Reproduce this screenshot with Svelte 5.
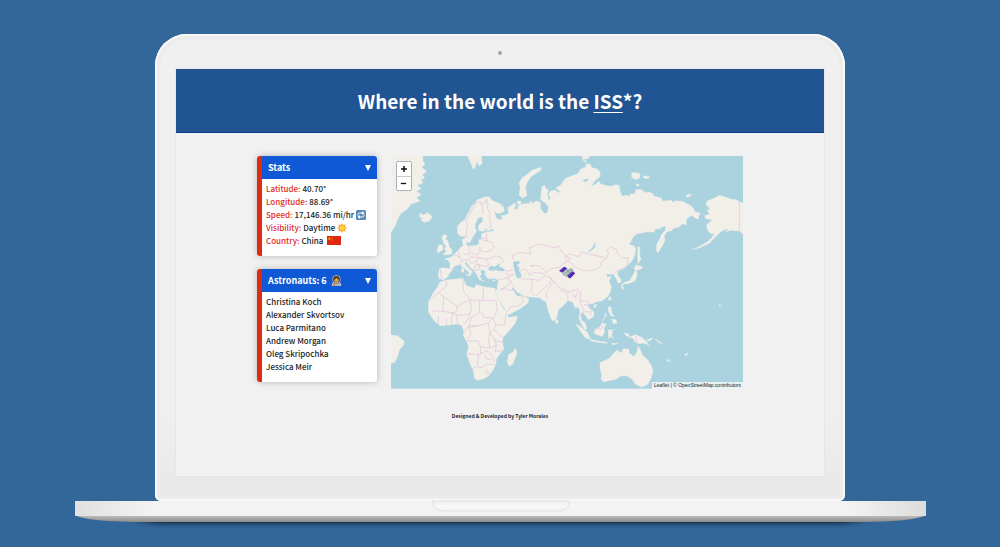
<script>
  let statsOpen = $state(true);
  let crewOpen = $state(true);

  const crew = [
    'Christina Koch',
    'Alexander Skvortsov',
    'Luca Parmitano',
    'Andrew Morgan',
    'Oleg Skripochka',
    'Jessica Meir'
  ];

  const land = [
    // Eurasia
    'M217 228L229 213 240 208 246 192 252 184 260 166 271 157 277 147 290 143 300 138 314 139 318 147 327 152 345 159 356 170 358 181 347 188 333 187 327 182 331 192 335 204 345 206 351 208 352 200 346 196 362 193 371 188 368 171 381 163 389 156 393 164 387 173 397 178 400 166 412 160 434 158 436 150 442 158 454 151 466 155 467 174 477 188 487 187 490 168 481 157 467 148 468 128 471 108 479 104 482 113 490 117 487 132 492 150 497 140 490 132 497 121 512 118 520 128 524 121 512 111 527 104 540 84 560 76 578 69 587 55 600 51 604 40 613 39 622 51 637 55 646 67 644 79 630 90 618 106 632 101 641 91 647 100 670 106 684 107 686 102 702 104 706 124 711 136 726 134 733 138 736 130 749 130 753 116 769 117 781 126 790 124 802 128 806 136 829 142 833 151 860 149 864 157 870 150 892 152 914 163 924 172 932 184 946 187 941 196 940 206 929 202 921 194 909 201 903 209 904 223 892 219 882 229 867 232 860 240 846 243 837 256 840 268 834 282 827 293 820 307 814 300 815 282 824 265 829 253 841 239 842 226 830 230 823 236 812 234 807 245 790 243 770 247 754 250 744 260 733 282 746 285 752 292 750 311 741 331 726 346 716 354 704 359 697 362 699 375 707 385 708 394 700 398 694 384 685 370 675 371 665 369 666 380 680 377 672 390 679 410 676 425 667 439 651 450 630 455 621 461 612 459 608 466 617 475 627 484 626 498 610 507 602 495 590 485 586 491 590 509 600 516 606 535 600 537 589 520 582 502 585 480 580 470 570 471 563 455 548 450 534 466 520 477 516 499 505 512 497 501 486 467 484 453 473 449 466 441 444 440 416 436 405 429 396 424 385 411 380 413 391 428 398 437 410 435 417 436 432 445 428 458 404 475 371 492 364 487 356 469 340 441 332 425 337 412 340 388 328 383 309 384 299 370 302 361 289 357 286 362 289 370 284 378 291 385 284 389 278 377 272 367 266 357 257 352 244 334 238 338 250 352 264 364 259 366 257 375 252 365 239 354 228 341 216 344 205 349 202 358 194 366 188 379 176 387 162 384 160 370 164 352 182 352 195 354 195 338 189 328 178 326 200 318 207 311 218 301 227 289 235 286 231 266 244 262 244 278 248 286 270 285 282 281 281 267 292 263 288 251 304 244 323 242 322 236 306 240 290 242 280 238 281 224 294 211 292 198 280 201 271 218 270 232 275 242 264 257 254 276 246 274 239 255 229 258 218 249Z',
    // Africa
    'M164 395L183 388 207 386 234 383 240 396 243 404 267 413 273 402 300 409 330 413 333 430 344 451 352 469 365 488 370 500 398 497 391 518 372 541 354 560 352 574 357 595 342 613 334 625 333 637 325 657 308 678 292 686 275 689 268 681 266 663 253 633 245 610 251 588 244 570 235 555 236 541 230 524 218 520 199 522 166 525 151 514 139 498 130 484 131 452 145 426 158 409Z',
    // Greenland and South America
    'M0 0L112 0 114 32 120 41 110 50 125 62 112 72 119 82 108 88 114 97 96 104 108 113 95 122 109 132 94 140 105 151 78 161 64 177 47 189 39 203 32 223 24 235 18 247 0 250Z',
    'M0 552L39 555 48 565 58 572 54 585 43 598 37 620 29 635 18 638 0 640Z',
    // Iceland, British Isles
    'M105 187L116 194 124 187 134 190 142 199 133 211 119 215 107 208 114 203 104 199Z',
    'M175 252L186 254 182 265 189 272 192 287 201 298 200 310 181 313 175 310 184 302 178 294 184 286 176 278 171 262Z',
    'M162 282L173 284 173 298 159 307 156 299Z',
    // Svalbard, Novaya Zemlya and arctic islands
    'M248 15L289 14 291 40 282 45 275 32 270 52 264 54 257 36Z',
    'M466 50L469 57 455 67 438 78 427 94 421 112 426 134 414 143 402 134 406 112 402 98 410 83 425 72 441 59Z',
    'M592 12L613 15 610 24 592 26Z M590 25L597 31 604 29 602 36Z',
    'M740 66L755 66 766 70 764 81 750 87 744 79 741 86Z M774 75L793 78 790 84 777 82Z M752 99L763 102 758 108Z M902 135L916 129 917 136 906 139Z M396 152L407 151 408 160 398 162Z',
    // Alaska
    'M1074 158L1052 147 1038 146 1022 140 1004 134 984 144 967 150 963 161 976 175 966 179 974 191 958 195 963 204 982 208 966 221 965 233 974 246 988 252 971 271 941 289 919 297 945 291 975 276 993 257 1006 245 1024 234 1030 237 1021 243 1040 239 1061 241 1074 251Z',
    // Japan and Sakhalin
    'M758 288L764 290 765 317 768 325 759 339 758 319Z M753 343L766 346 774 350 765 356 752 360 747 352Z M754 360L757 371 751 389 735 398 718 400 710 407 716 411 713 418 708 405 718 395 734 390 744 373 750 361Z',
    // South-east Asia
    'M673 438L679 441 675 451 670 446Z M627 463L635 461 633 469 626 471Z M670 468L679 470 680 488 688 498 677 495 670 480Z M680 505L693 507 696 517 685 520Z M660 488L666 494 651 510 661 496Z',
    'M572 520L587 528 608 546 617 566 602 563 586 541Z M616 566L638 571 661 574 669 578 643 576 618 571Z',
    'M629 536L645 529 651 516 664 521 657 533 658 545 652 557 638 553 628 548Z M670 538L689 537 678 541 684 548 678 551 687 565 677 557 671 565Z M680 578L698 578 685 583Z',
    'M717 547L731 550 732 560 751 552 770 560 783 572 792 584 776 577 763 579 751 574 743 562 727 558Z M785 568L804 561 798 569 786 571Z',
    // Australia and Tasmania
    'M645 636L661 629 676 621 684 610 697 598 709 608 715 594 732 596 732 607 747 618 757 601 759 586 766 597 772 613 789 629 799 645 804 661 798 682 789 701 769 709 751 701 744 688 738 683 725 676 708 675 693 686 672 690 656 693 648 686 650 671 645 654Z',
    // Madagascar, Sri Lanka, Hawaii and Pacific dots
    'M392 593L396 608 382 642 371 646 367 630 371 611 382 606Z M512 503L520 511 518 519 512 517Z M1002 461L1008 464 1004 468Z M844 625L857 633 847 632Z M898 612L909 607 904 615Z M810 564L834 580 820 575Z',
    // Mediterranean islands
    'M230 343L235 343 234 351 230 350Z M229 354L237 354 236 365 230 365Z M242 370L256 371 253 377Z M288 389L299 390 292 392Z M322 389L331 388 327 392Z'
  ];

  const lakes = [
    'M310 352L318 345 329 348 337 342 348 337 341 347 354 353 360 360 348 362 332 358 313 360Z',
    'M384 334L397 330 407 336 396 342 403 352 402 360 409 371 407 382 395 381 391 368 387 353Z',
    'M608 304L622 291 629 276 632 279 629 292 613 304Z M297 239L303 233 306 240Z M317 237L326 236 324 243Z M592 90L605 84 612 87 600 94Z M437 343L444 344 440 350Z'
  ];

  const borders =
    'M246 262L244 244 247 225 244 207 254 192 261 176 273 157 286 153 292 159 300 158 304 145M286 153L292 166 294 190M304 145L309 160 307 173 315 188 314 207 319 220 315 235M290 262L306 264 308 271 323 277 326 291 316 301 296 304 285 299 285 286M250 286L255 305 278 313 286 299M208 312L222 318 231 328 225 337M221 299L222 320M230 330L247 328 260 319 279 320 303 326 318 322 333 315 350 321 355 336M247 328L260 338 272 330 281 342 300 348 312 343M258 319L251 309 235 311M272 330L287 321M270 345L270 360 281 357 285 345M303 326L312 343M285 345L270 340M355 353L367 362 384 358M361 367L376 374 388 371M323 363L326 353M305 264L304 245M278 265L308 271M166 354L170 385M195 354L203 358' +
    'M386 328L381 314 405 305 438 310 432 292 465 280 491 286 503 291 520 286 535 310 558 326M404 360L423 355 434 374 450 365 478 369 499 354 524 350 533 340 545 334 556 324M434 345L463 345 484 364M409 384L440 386 443 405 437 422 449 435M440 386L462 389 481 374 500 382 493 398 481 410 465 421 454 436M488 376L505 391 494 410 483 424 486 446M505 391L520 409 555 424 580 414M523 417L553 429M548 433L549 453 563 455M563 430L570 441 581 418' +
    'M540 317L555 310 581 318 590 304 620 312 652 319 664 323 650 333 643 350 625 359 598 361 573 351 559 337 544 330 540 317M664 323L671 309 665 298 676 289 695 296 699 311 709 322 730 321 727 342 715 353 697 358 687 369M586 422L586 454 597 481 594 496M588 453L598 448 617 458M597 462L611 463 621 484 615 494M600 483L617 484M629 536L650 534 655 523M753 555L755 579' +
    'M340 388L368 382 377 392 372 402 345 418M363 374L368 382 383 371M377 392L387 411M345 418L358 413 380 421 387 413M407 437L415 447 407 463 375 470 367 483M412 437L421 437M1063 154L1063 241 1074 250' +
    'M234 383L235 421 256 448 284 449 296 449 333 449M295 410L295 449M180 388L187 404 160 426 135 447M160 426L176 438 173 482 144 481M176 438L217 468 235 456 256 448M173 482L201 486 214 494 218 520M217 468L214 483 201 486M214 494L253 491 259 476 256 448M253 491L252 503 238 520M284 449L283 485 261 498 250 530 236 541M288 484L297 500 325 502 337 480 333 449M325 502L333 523 359 522 363 490M333 523L326 537 352 560M325 502L309 518 279 525 251 530M252 530L258 550 246 571M250 525L279 525M309 518L315 542 311 570 314 592 287 589 279 571 246 571M326 537L316 549 330 570 352 574M249 610L281 611 306 600 324 616 328 635M287 589L287 611M314 592L334 583 331 604 355 597M281 611L277 645 257 659 266 663M276 650L290 651 304 641 325 641M297 611L307 626 321 626M334 583L329 562M160 494L160 520M184 501L185 523M201 486L199 522M300 664L307 660 312 666 306 671Z';
</script>

<div class="page">
  <div class="lid">
    <svg class="camera" viewBox="0 0 6 6" aria-hidden="true"><circle cx="3" cy="3" r="2.3" fill="#c3c3c3" /><circle cx="3" cy="3" r="1.1" fill="#888" /></svg>
    <div class="screen">
      <header><h1>Where in the world is the <a href="#iss">ISS</a>*?</h1></header>
      <main>
        <div class="panels">
          <section class="panel">
            <h2>
              <button aria-expanded={statsOpen} onclick={() => (statsOpen = !statsOpen)}>
                <span>Stats</span>
                <svg class="caret" viewBox="0 0 6 6"><path d="M0 0H6L3 6Z" fill="#fff" /></svg>
              </button>
            </h2>
            {#if statsOpen}
              <ul>
                <li><span class="key">Latitude:</span> 40.70°</li>
                <li><span class="key">Longitude:</span> 88.69°</li>
                <li>
                  <span class="key">Speed:</span> 17,146.36 mi/hr
                  <button class="convert" aria-label="Convert units">
                    <svg viewBox="0 0 20 20"><rect width="20" height="20" rx="3" fill="#5788b5" /><path d="M4 11V9Q4 6 7 6H13M16 9V11Q16 14 13 14H7" fill="none" stroke="#fff" stroke-width="2" /><path d="M12 2L17 6 12 10ZM8 10L3 14 8 18Z" fill="#fff" /></svg>
                  </button>
                </li>
                <li>
                  <span class="key">Visibility:</span> Daytime
                  <svg class="emoji" viewBox="0 0 20 20"><path d="M10 0L12 4 17 3 16 8 20 10 16 12 17 17 12 16 10 20 8 16 3 17 4 12 0 10 4 8 3 3 8 4Z" fill="#f5a52c" /><circle cx="10" cy="10" r="5" fill="#ffd23e" /></svg>
                </li>
                <li>
                  <span class="key">Country:</span> China
                  <svg class="flag" viewBox="0 0 42 27"><path d="M0 0H42V27H0Z" fill="#de2910" /><path d="M7 3L8.2 6.4H12L9 8.600 10 12 7 10 4 12 5 8.600 2 6.400H5.800Z" fill="#ffde00" /><g fill="#ffde00"><circle cx="14" cy="3" r="1" /><circle cx="17" cy="6" r="1" /><circle cx="17" cy="10" r="1" /><circle cx="14" cy="13" r="1" /></g></svg>
                </li>
              </ul>
            {/if}
          </section>
          <section class="panel">
            <h2>
              <button aria-expanded={crewOpen} onclick={() => (crewOpen = !crewOpen)}>
                <span>Astronauts: {crew.length}</span>
                <svg class="astronaut" viewBox="0 0 30 30"><path d="M2 29Q3 20 9 20H21Q27 20 28 29Z" fill="#d8d5cd" /><path d="M5 21H25L23 26H7Z" fill="#8a8781" /><circle cx="15" cy="12" r="11" fill="#c9c7c1" /><circle cx="15" cy="12" r="9" fill="#352317" /><path d="M9 12Q15 4 21 12V15Q20 21 15 21T9 15Z" fill="#e9b45c" /><path d="M8 12Q9 4 15 4T22 12Q17 11 15 8 13 11 8 12Z" fill="#6f3f1d" /><path d="M12 13H13M17 13H18M13 17H17" stroke="#60381b" stroke-width="1.500" /><path d="M6 25H11V29H6Z" fill="#d5683d" /></svg>
                <svg class="caret" viewBox="0 0 6 6"><path d="M0 0H6L3 6Z" fill="#fff" /></svg>
              </button>
            </h2>
            {#if crewOpen}
              <ul>
                {#each crew as name}<li>{name}</li>{/each}
              </ul>
            {/if}
          </section>
        </div>
        <div class="map">
          <svg class="world" viewBox="18 16 1056 698" role="img" aria-label="World map">
            <rect x="18" y="16" width="1056" height="698" fill="#aad3df" />
            <g fill="#f2efe9" stroke="#f2efe9" stroke-width="1" stroke-linejoin="round">
              {#each land as d}<path {d} />{/each}
            </g>
            {#each lakes as d}<path {d} fill="#aad3df" />{/each}
            <path d={borders} fill="none" stroke="#e2c0db" stroke-width="2" stroke-linejoin="round" />
            <g>
              <path d="M540 357L559 352 567 360 547 378 533 374 532 367Z" fill="#b8c4c4" />
              <path d="M534 372L562 354M542 377L565 360M545 355L557 374" stroke="#75918e" stroke-width="2" />
              <path d="M522 360L537 348 547 353 532 366ZM546 376L562 362 571 368 555 384Z" fill="#5c2fbd" />
              <path d="M527 363L542 350M551 380L567 365" stroke="#35227a" stroke-width="2" />
            </g>
          </svg>
          <div class="zoom">
            <button aria-label="Zoom in"><svg viewBox="0 0 8 8"><path d="M4 1V7M1 4H7" stroke="#111" stroke-width="1.500" /></svg></button>
            <button aria-label="Zoom out"><svg viewBox="0 0 8 8"><path d="M1 4H7" stroke="#111" stroke-width="1.500" /></svg></button>
          </div>
          <div class="credit"><a href="#leaflet">Leaflet</a> | © <a href="#osm">OpenStreetMap</a> contributors</div>
        </div>
      </main>
      <footer>Designed &amp; Developed by Tyler Morales</footer>
    </div>
  </div>
  <svg class="base" viewBox="0 0 851 32" aria-hidden="true">
    <defs>
      <linearGradient id="deck"><stop offset="0" stop-color="#e0e0e0" /><stop offset=".09" stop-color="#f3f3f3" /><stop offset=".91" stop-color="#f3f3f3" /><stop offset="1" stop-color="#dcdcdc" /></linearGradient>
      <linearGradient id="under" x2="0" y2="1"><stop offset="0" stop-color="#c4c4c4" /><stop offset="1" stop-color="#8b8b8b" /></linearGradient>
      <linearGradient id="notch" x2="0" y2="1"><stop offset="0" stop-color="#ececec" /><stop offset=".5" stop-color="#f8f8f8" /><stop offset="1" stop-color="#f2f2f2" /></linearGradient>
      <filter id="soft" x="-10%" y="-200%" width="120%" height="500%"><feGaussianBlur stdDeviation="6 2" /></filter>
    </defs>
    <path d="M50 17H801L770 23H80Z" fill="#172d45" filter="url(#soft)" />
    <path d="M0 14Q12 21 70 21H781Q839 21 851 14Z" fill="url(#under)" />
    <path d="M0 0H851V15H0Z" fill="url(#deck)" />
    <path d="M357 0H495Q493 10 483 10H369Q359 10 357 0Z" fill="url(#notch)" stroke="#e2e2e2" stroke-width="1" />
  </svg>
</div>

<style>
  :global(body) { margin: 0; background: #336699; }
  * { box-sizing: border-box; }
  .page {
    min-height: 100vh;
    padding-top: 34px;
    display: flex;
    flex-direction: column;
    align-items: center;
    background: #336699;
    color: #1c1c1c;
    font-family: "Noto Sans CJK SC", "Open Sans", sans-serif;
  }
  .lid {
    width: 69%;
    display: flex;
    flex-direction: column;
    padding: 16px 21px 25px;
    border-radius: 32px 32px 6px 6px;
    background: linear-gradient(#f0f0f0 80%, #e9e9e9 96%);
    box-shadow: inset 0 0 0 2px #f8f8f8, inset 0 0 0 5px #ebebeb;
  }
  .camera { width: 6px; height: 6px; align-self: center; margin-bottom: 13px; }
  .screen { background: #f1f1f1; box-shadow: 0 0 0 1px #e6e6e6; }
  header { background: #215492; border-bottom: 1px solid #0d4086; padding: 16px; }
  h1 { margin: 0; color: #fff; text-align: center; font-size: 19px; line-height: 31px; font-weight: 700; }
  h1 a { color: inherit; text-decoration: underline; text-decoration-thickness: 1px; text-underline-offset: 3px; }
  main {
    width: 75%;
    margin: 0 auto;
    padding: 23px 0;
    display: grid;
    grid-template-columns: 120px 1fr;
    align-items: start;
    gap: 14px;
  }
  .panels { display: grid; gap: 13px; }
  .panel {
    border-left: 5px solid #df2b12;
    border-radius: 3px;
    background: #fff;
    box-shadow: 0 0 6px rgba(0, 0, 0, 0.25);
  }
  h2 { margin: 0; }
  button { font: inherit; cursor: pointer; }
  h2 button {
    width: 100%;
    height: 23px;
    padding: 0 6px;
    display: flex;
    align-items: center;
    gap: 4px;
    border: 0;
    border-radius: 0 3px 0 0;
    background: #1059d6;
    color: #fff;
    font-size: 9px;
    line-height: 15px;
    font-weight: 700;
  }
  .caret { width: 6px; height: 6px; margin-left: auto; }
  .astronaut { width: 11px; height: 11px; }
  ul { list-style: none; margin: 0; padding: 3px 4px 9px; font-size: 8px; line-height: 13px; font-weight: 500; }
  li { display: flex; align-items: center; gap: 2px; height: 13px; white-space: nowrap; }
  .key { color: #df2b20; }
  .convert { padding: 0; border: 0; background: none; display: flex; }
  .convert svg, .emoji { width: 10px; height: 10px; }
  .flag { width: 14px; height: 9px; margin-left: 2px; }
  .map { position: relative; }
  .world { display: block; width: 100%; height: auto; }
  .zoom {
    position: absolute;
    top: 5px;
    left: 5px;
    border: 1px solid #a9b3b5;
    border-radius: 2px;
    background: #fff;
    display: grid;
  }
  .zoom button { width: 14px; height: 14px; padding: 3px; border: 0; background: none; display: flex; }
  .zoom button + button { border-top: 1px solid #ccc; }
  .credit {
    position: absolute;
    right: 0;
    bottom: 0;
    padding: 0 2px;
    background: rgba(255, 255, 255, 0.7);
    color: #222;
    font: 5px/7px "Liberation Sans", sans-serif;
  }
  .credit a { color: inherit; text-decoration: none; }
  footer { padding-bottom: 56px; text-align: center; font-size: 5px; line-height: 8px; font-weight: 700; }
  .base { width: 85.1%; height: auto; overflow: visible; }
</style>
